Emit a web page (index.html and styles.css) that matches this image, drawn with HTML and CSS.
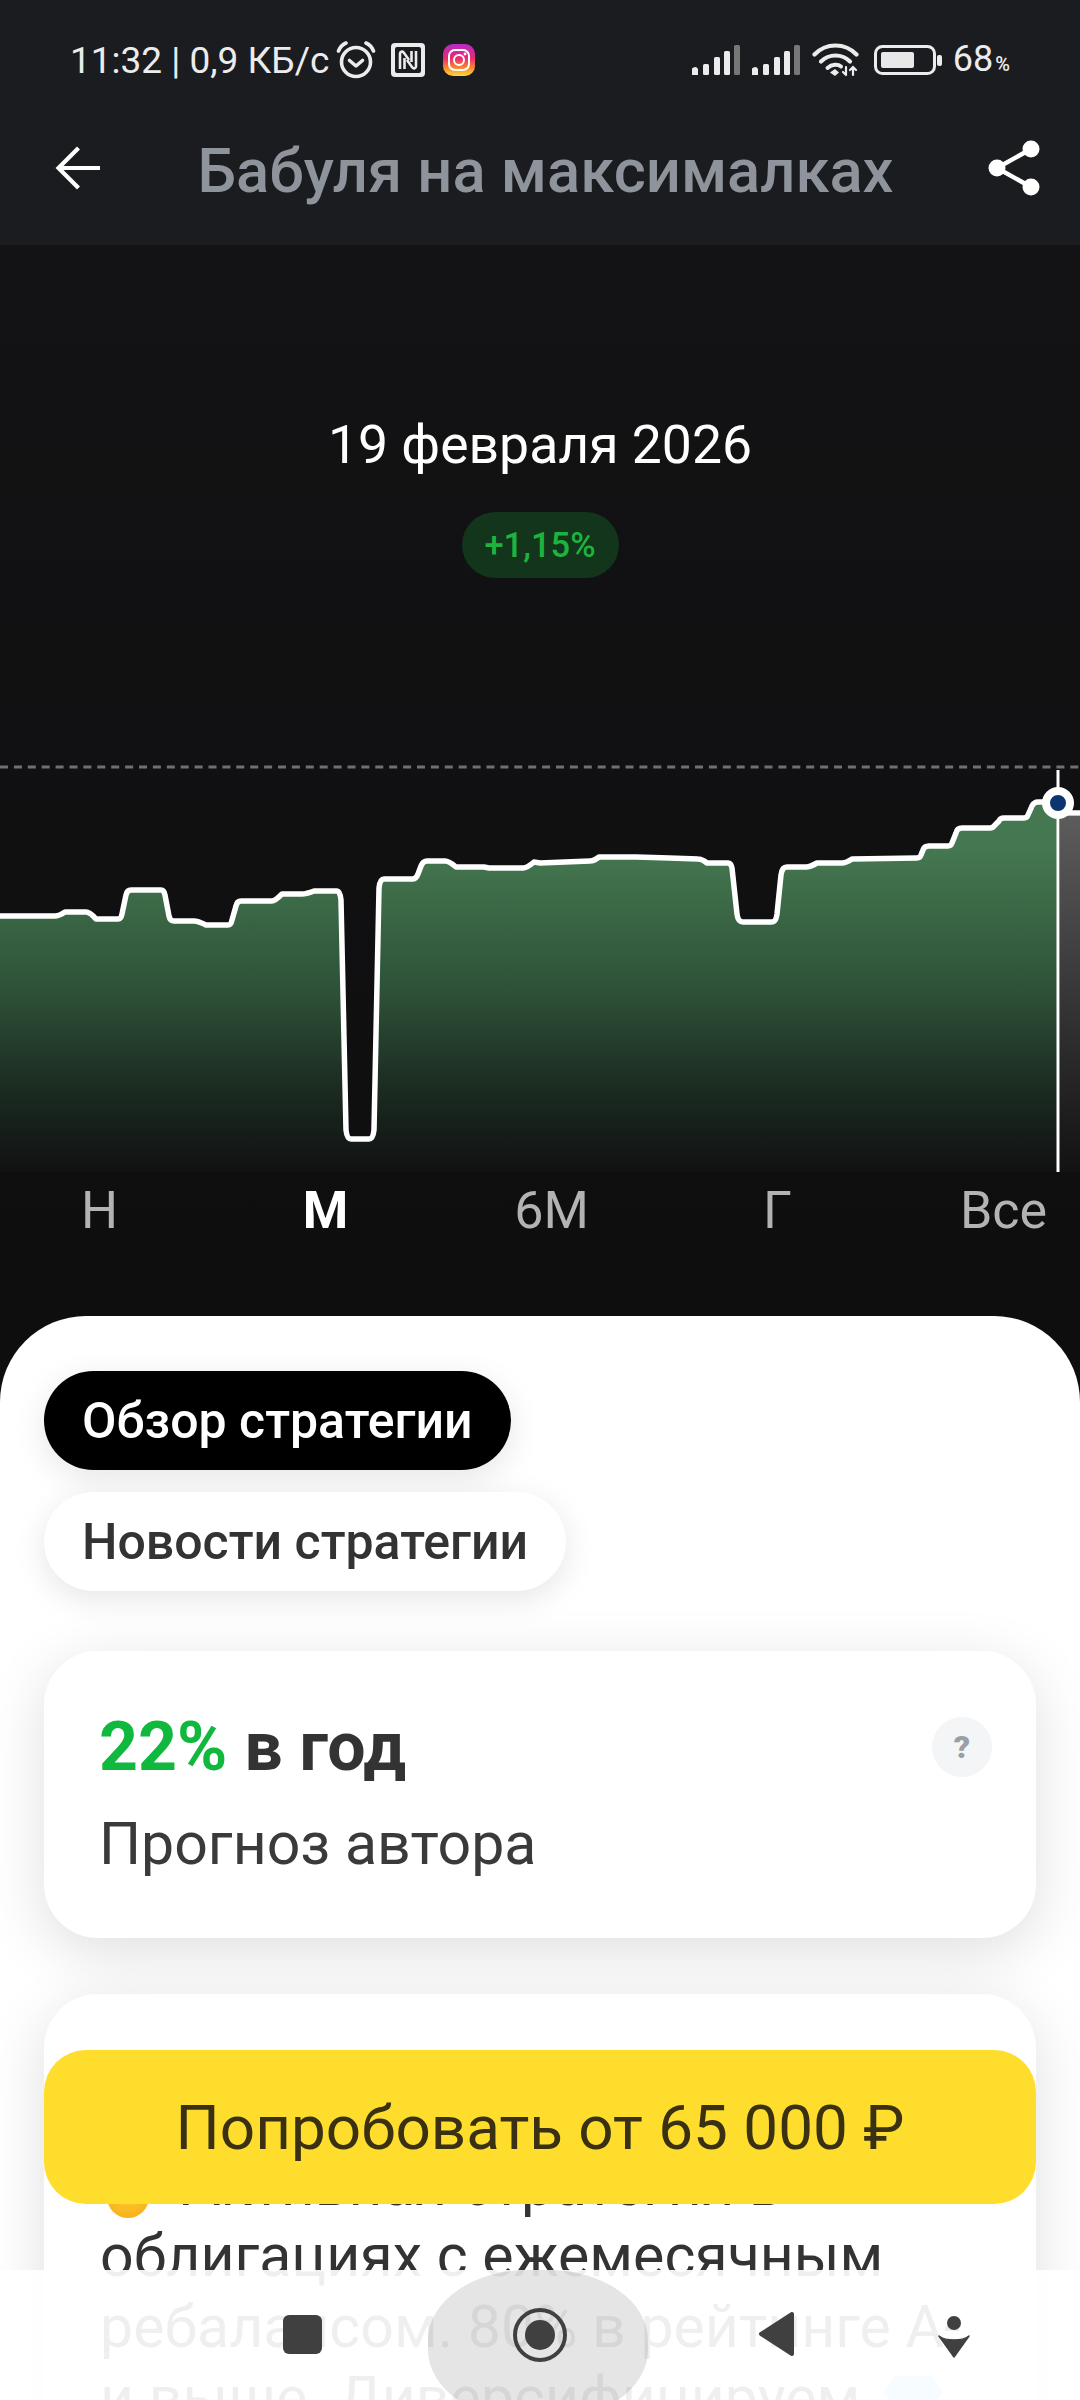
FILE: index.html
```html
<!DOCTYPE html>
<html lang="ru">
<head>
<meta charset="utf-8">
<title>Бабуля на максималках</title>
<link rel="stylesheet" href="styles.css">
</head>
<body>
<div class="app">
  <header class="top">
    <div class="status">
      <span class="status-text">11:32 | 0,9 КБ/с</span>
      <svg class="ic-alarm" viewBox="0 0 40 38" fill="none" stroke="#ececec" stroke-width="3.6" stroke-linecap="round" stroke-linejoin="round"><circle cx="20" cy="21" r="14.5"/><path d="M13.5 19.5 20 25l6.5-5.5"/><path d="M2.5 10C4 6 6.500 3.500 10 2M37.500 10C36 6 33.500 3.500 30 2"/></svg>
      <svg class="ic-nfc" viewBox="0 0 34 34"><rect width="34" height="34" rx="4" fill="#ececec"/><rect x="4" y="4" width="26" height="26" rx="2" fill="#1b1c1f"/><path d="M9 26V10.500a2 2 0 0 1 3.500-1.200L18 17M25 8v15.500a2 2 0 0 1-3.500 1.200L16 17M13.500 26V15M20.500 8v11" fill="none" stroke="#ececec" stroke-width="2.600"/></svg>
      <svg class="ic-insta" viewBox="0 0 32 32"><defs><linearGradient id="ig" x1="0.500" y1="1" x2="0.500" y2="0"><stop offset="0" stop-color="#ffd83b"/><stop offset="0.250" stop-color="#fb8a2c"/><stop offset="0.550" stop-color="#ea2a6e"/><stop offset="1" stop-color="#b52bc9"/></linearGradient></defs><rect width="32" height="32" rx="10" fill="url(#ig)"/><rect x="6" y="6" width="20" height="20" rx="6" fill="none" stroke="#fff" stroke-width="2"/><circle cx="16" cy="16" r="5" fill="none" stroke="#fff" stroke-width="2"/><circle cx="22" cy="10" r="1.400" fill="#fff"/></svg>
      <div class="status-right">
        <svg class="ic-signal" viewBox="0 0 48 30"><g fill="#ececec"><path d="M0 27a3 3 0 0 1 6-3v6H0z"/><rect x="11" y="19" width="6" height="11" rx="1.500"/><rect x="22" y="12" width="6" height="18" rx="1.500"/><rect x="32" y="6" width="6" height="24" rx="1.500"/></g><rect x="42" y="0" width="6" height="30" rx="1.500" fill="#777"/></svg>
        <svg class="ic-signal" viewBox="0 0 48 30"><g fill="#ececec"><path d="M0 27a3 3 0 0 1 6-3v6H0z"/><rect x="11" y="19" width="6" height="11" rx="1.500"/><rect x="22" y="12" width="6" height="18" rx="1.500"/><rect x="32" y="6" width="6" height="24" rx="1.500"/></g><rect x="42" y="0" width="6" height="30" rx="1.500" fill="#777"/></svg>
        <svg class="ic-wifi" viewBox="0 0 47 34" fill="none" stroke="#ececec" stroke-linecap="round"><path d="M2.500 11.500C14 -0.500 33 -0.500 44.500 11.500" stroke-width="4.200"/><path d="M9 18.500C17 10.500 30 10.500 38 18.500" stroke-width="4.200"/><path d="M15.500 25C20 21 26 21 29 23.500" stroke-width="4"/><path d="M18 29.500 23 26l4 3.500-4 3.500z" fill="#ececec" stroke="none"/><path d="M34 24v8M31 29l3 3 M41 32v-8M38 27l3-3 3 3" stroke-width="2.200"/></svg>
        <svg class="ic-batt" viewBox="0 0 70 30"><rect x="1.500" y="1.500" width="59" height="27" rx="7" fill="none" stroke="#ececec" stroke-width="3"/><rect x="7" y="7" width="33" height="16" rx="2" fill="#e8e8e8"/><rect x="63" y="10" width="5" height="11" rx="2" fill="#ececec"/></svg>
        <span class="batt-num">68<span class="batt-pct">%</span></span>
      </div>
    </div>
    <div class="titlebar">
      <svg class="ic-back" viewBox="0 0 46 44" fill="none" stroke="#fff" stroke-width="4.200"><path d="M45 22H4M23.500 2 3.500 22l20 20"/></svg>
      <h1 class="title">Бабуля на максималках</h1>
      <svg class="ic-share" viewBox="0 0 52 56"><g fill="#fff"><circle cx="43" cy="9" r="8.500"/><circle cx="9" cy="28" r="8.500"/><circle cx="43" cy="47" r="8.500"/></g><path d="M43 9 9 28l34 19" fill="none" stroke="#fff" stroke-width="4.500"/></svg>
    </div>
  </header>

  <section class="hero">
    <div class="date">19 февраля 2026</div>
    <div class="badge">+1,15%</div>
    <svg class="chart" viewBox="0 760 1080 420">
      <defs>
        <linearGradient id="area" gradientUnits="userSpaceOnUse" x1="0" y1="850" x2="0" y2="1172">
          <stop offset="0" stop-color="#447850"/>
          <stop offset="0.450" stop-color="#2d5037"/>
          <stop offset="0.750" stop-color="#1b2a20"/>
          <stop offset="1" stop-color="#101112"/>
        </linearGradient>
        <linearGradient id="rest" x1="0" y1="0" x2="0" y2="1">
          <stop offset="0" stop-color="#5c5c5c"/>
          <stop offset="1" stop-color="#121213"/>
        </linearGradient>
      </defs>
      <path class="dash" d="M0 767H1080"/>
      <rect x="1060" y="816" width="20" height="356" fill="url(#rest)"/>
      <path fill="url(#area)" d="M0 916H57L65 912H88L96 919H121L129 890H166L172 921H198L206 925H231L238 901H275L282 894H306L314 891H339L348 1139H372L380 879H417L424 861H449L456 867H484L489 868H525L534 862L540 863L592 861L599 857H636L669 858L700 859L707 863H731L740 922H776L784 867H809L817 863H845L852 859L919 858L925 846H951L958 828H994L1001 818H1027L1036 802L1058 805V1172H0Z"/>
      <path class="line" d="M0 916H55Q59 916 65 912H86Q90 912 96 919H118Q121 919 122 914L126 895Q127 890 131 890H161Q164 890 165 895L169 916Q170 921 174 921H194Q198 921 206 925H228Q231 925 232 920L236 906Q237 901 241 901H272Q275 901 282 894H302Q306 894 314 891H337Q340 891 341 900L346 1130Q347 1139 351 1139H369Q373 1139 374 1130L379 888Q380 879 384 879H413Q416 879 418 874L421 866Q423 861 427 861H445Q449 861 456 867H484L489 868H523Q527 868 534 862L540 863L590 861Q594 861 599 857H636L669 858L698 859Q702 859 707 863H728Q731 863 732 868L737 914Q738 922 743 922H772Q776 922 777 914L781 875Q782 867 787 867H806Q810 867 817 863H842Q846 863 852 859L917 858Q920 858 921 855L923 850Q924 846 929 846H948Q951 846 952 843L956 833Q957 828 962 828H990Q993 828 995 825L999 821Q1000 818 1004 818H1024Q1027 818 1028 815L1032 806Q1034 802 1038 802H1058"/>
      <path class="line" d="M1058 813H1080"/>
      <path class="cursor" d="M1058 770V1172"/>
      <circle cx="1058" cy="803" r="12" fill="#0b3470" stroke="#fff" stroke-width="8"/>
    </svg>
    <nav class="ranges">
      <span class="range">Н</span>
      <span class="range range-on">М</span>
      <span class="range">6М</span>
      <span class="range">Г</span>
      <span class="range">Все</span>
    </nav>
  </section>

  <main class="panel">
    <div class="pills">
      <span class="pill pill-on">Обзор стратегии</span>
      <span class="pill">Новости стратегии</span>
    </div>
    <article class="card card-forecast">
      <div class="forecast-head"><span class="green">22%</span> в год</div>
      <div class="forecast-sub">Прогноз автора</div>
      <span class="help">?</span>
    </article>
    <article class="card card-about">
      <p class="about"><span class="emoji-dot"></span>Активная стратегия в<br>облигациях с ежемесячным<br>ребалансом. 80% в рейтинге А-<br>и выше. Диверсифицируем <svg class="emoji-gem" viewBox="0 0 60 50"><path d="M12 0h36l12 16-30 34L0 16z" fill="#8fd0f5"/></svg></p>
    </article>
  </main>

  <button class="cta">Попробовать от 65 000 ₽</button>

  <div class="navbar">
    <span class="ripple"></span>
    <span class="nav-square"></span>
    <svg class="nav-home" viewBox="0 0 56 56"><circle cx="28" cy="28" r="25" fill="none" stroke="#404040" stroke-width="4"/><circle cx="28" cy="28" r="15" fill="#404040"/></svg>
    <svg class="nav-back" viewBox="0 0 38 46"><path d="M34 3 3 23l31 20z" fill="#404040" stroke="#404040" stroke-width="4" stroke-linejoin="round"/></svg>
    <svg class="nav-person" viewBox="0 0 32 42"><circle cx="16" cy="7" r="7" fill="#404040"/><path d="M1 20c4 3 8 4 15 4s11-1 15-4l-15 21z" fill="#404040" stroke="#404040" stroke-width="1.500" stroke-linejoin="round"/></svg>
  </div>
</div>
</body>
</html>
```

FILE: styles.css
```css
* { box-sizing: border-box; }
html, body { margin: 0; padding: 0; }
body { font-family: Roboto, "Noto Sans", sans-serif; background: #111; }
.app { position: relative; width: 1080px; height: 2400px; overflow: hidden; background: #0e0e0f; }

.top { height: 245px; background: #1b1c1f; }
.status { height: 120px; display: flex; align-items: center; padding: 0 70px; color: #ececec; }
.status-text { font-size: 37px; line-height: 44px; width: 266px; padding-top: 2px; white-space: nowrap; }
.ic-alarm { width: 40px; height: 38px; }
.ic-nfc { width: 34px; height: 34px; margin-left: 15px; }
.ic-insta { width: 32px; height: 32px; margin-left: 18px; }
.status-right { margin-left: auto; display: flex; align-items: center; }
.ic-signal { width: 48px; height: 30px; margin-right: 12px; }
.ic-wifi { width: 47px; height: 34px; margin-right: 15px; }
.ic-batt { width: 70px; height: 30px; margin-right: 9px; }
.batt-num { font-size: 36px; line-height: 44px; padding-top: 2px; }
.batt-pct { font-size: 20px; font-weight: 500; margin-left: 2px; }

.titlebar { height: 96px; display: flex; align-items: center; padding: 0 40px 0 55px; }
.ic-back { width: 46px; height: 44px; flex: none; }
.ic-share { width: 52px; height: 56px; flex: none; }
.title { flex: 1; margin: 6px 0 0 2px; text-align: center; font-size: 61.500px; line-height: 70px; font-weight: 500; color: #8f939c; white-space: nowrap; }

.hero { height: 1071px; background: linear-gradient(#131315, #0e0e0f); padding-top: 168px; display: flex; flex-direction: column; align-items: center; }
.date { font-size: 53.500px; line-height: 64px; color: #fff; }
.badge { margin-top: 35px; width: 157px; height: 66px; border-radius: 33px; background: #12351b; color: #1db33e; font-size: 34.500px; font-weight: 500; display: flex; align-items: center; justify-content: center; }
.chart { display: block; width: 1080px; height: 420px; margin-top: 182px; flex: none; }
.dash { stroke: #707070; stroke-width: 3; stroke-dasharray: 8 5.900; fill: none; }
.line { fill: none; stroke: #fff; stroke-width: 5.500; stroke-linejoin: round; stroke-linecap: round; }
.cursor { stroke: #fff; stroke-width: 3; fill: none; }

.ranges { width: 1130px; margin: 3px 0 0 23px; flex: none; display: grid; grid-template-columns: repeat(5, 226px); }
.range { text-align: center; font-size: 52px; line-height: 56px; color: #b3b3b3; }
.range-on { color: #fff; font-weight: 700; }

.panel { height: 1084px; background: #fff; border-radius: 86px 86px 0 0; padding: 55px 44px 0; }
.pills { display: flex; flex-direction: column; align-items: flex-start; gap: 22px; }
.pill { height: 99px; border-radius: 50px; padding: 0 38px; display: flex; align-items: center; font-size: 50px; font-weight: 500; color: #333; background: #fff; box-shadow: 0 8px 32px rgba(0,0,0,.1); }
.pill-on { background: #000; color: #fff; }

.card { position: relative; background: #fff; border-radius: 54px; box-shadow: 0 14px 60px rgba(0,0,0,.13); }
.card-forecast { height: 287px; margin-top: 60px; padding: 56px 55px 0; }
.forecast-head { font-size: 68px; line-height: 80px; font-weight: 700; color: #333; }
.green { color: #10b83e; }
.forecast-sub { font-size: 59px; line-height: 70px; margin-top: 22px; color: #3a3a3a; }
.help { position: absolute; top: 66px; right: 44px; width: 60px; height: 60px; border-radius: 50%; background: #f3f5f6; color: #9a9ea6; font-size: 32px; font-weight: 900; display: flex; align-items: center; justify-content: center; }

.card-about { margin-top: 56px; height: 600px; padding: 155px 56px 0; }
.about { margin: 0; font-size: 59px; line-height: 71px; color: #333; white-space: nowrap; }
.emoji-dot { display: inline-block; width: 42px; height: 42px; border-radius: 50%; margin: 0 33px 0 7px; background: radial-gradient(circle at 50% 30%, #ffd23a, #f6a915); vertical-align: -13px; }
.emoji-gem { width: 60px; height: 50px; margin-left: 8px; vertical-align: -8px; }

.cta { position: absolute; left: 44px; top: 2050px; width: 992px; height: 154px; border: 0; border-radius: 42px; background: #ffdd2d; color: #3a3113; font-family: inherit; font-size: 62px; padding: 0; }

.navbar { position: absolute; left: 0; right: 0; bottom: 0; height: 130px; background: rgba(255,255,255,.92); }
.ripple { position: absolute; left: 428px; top: 0; width: 220px; height: 150px; border-radius: 100px / 70px; background: rgba(0,0,0,.1); }
.nav-square { position: absolute; left: 283px; top: 45px; width: 39px; height: 39px; border-radius: 6px; background: #404040; }
.nav-home { position: absolute; left: 512px; top: 37px; width: 56px; height: 56px; }
.nav-back { position: absolute; left: 758px; top: 41px; width: 38px; height: 46px; }
.nav-person { position: absolute; left: 938px; top: 46px; width: 32px; height: 42px; }
```
